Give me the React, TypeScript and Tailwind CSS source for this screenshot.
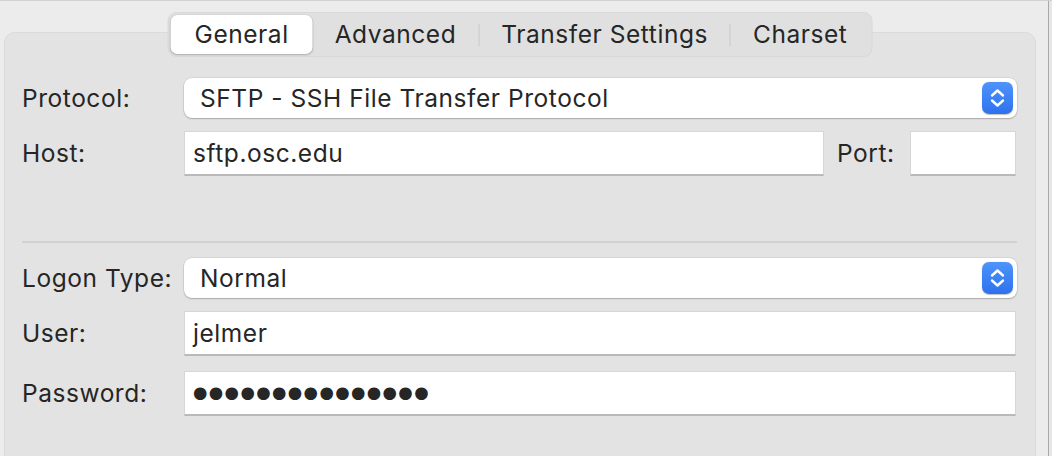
import React from "react";

const font = { fontFamily: "Inter, 'Noto Sans', 'Liberation Sans', sans-serif", letterSpacing: "0.55px" };

function Stepper() {
  return (
    <div className="absolute right-[4px] top-1/2 -translate-y-1/2 w-[31px] h-[32px] rounded-[7px] bg-gradient-to-b from-[#4f93fa] to-[#2d72ee] flex items-center justify-center shadow-[0_0.5px_1px_rgba(0,0,0,0.25)]">
      <svg width="31" height="32" viewBox="0 0 31 32" fill="none">
        <path d="M10 13.5 L15.5 8.5 L21 13.5" stroke="white" strokeWidth="2.4" strokeLinecap="round" strokeLinejoin="round" />
        <path d="M10 18.5 L15.5 23.5 L21 18.5" stroke="white" strokeWidth="2.4" strokeLinecap="round" strokeLinejoin="round" />
      </svg>
    </div>
  );
}

function Select({ value }: { value: string }) {
  return (
    <div className="relative w-[833px] h-[40px] bg-white rounded-[8px] shadow-[0_0_0_0.5px_rgba(0,0,0,0.12),0_1px_1.5px_rgba(0,0,0,0.22)] flex items-center pl-[16px] text-[24.5px] text-[#262626] whitespace-nowrap">
      {value}
      <Stepper />
    </div>
  );
}

function Input({ w, children }: { w: string; children?: React.ReactNode }) {
  return (
    <div className={`${w} h-[45px] bg-white border-t border-l border-r border-[#d6d6d6] border-b-[2px] border-b-[#b9b9b9] flex items-center pl-[8px] text-[24.5px] text-[#262626] whitespace-nowrap`}>
      {children}
    </div>
  );
}

function Label({ children }: { children: React.ReactNode }) {
  return <div className="w-[162px] shrink-0 text-[24.5px] text-[#262626] whitespace-nowrap">{children}</div>;
}

export default function App() {
  const tabs = ["General", "Advanced", "Transfer Settings", "Charset"];
  return (
    <div style={font} className="w-[1052px] h-[456px] bg-[#ececec] overflow-hidden flex border-t border-[#d2d2d2]">
      <div className="w-[1048px] shrink-0 pt-[31px] pl-[4px] pr-[12px]">
        <div className="relative h-[460px] bg-[#e3e3e3] rounded-[11px] border border-[#dadada] pl-[17px] pr-[18px] pt-[45px]">
          <div className="absolute left-1/2 -translate-x-1/2 top-[-21px] flex items-center bg-[#e0e0e0] rounded-[9px] p-[2px] border border-[#d9d9d9] whitespace-nowrap">
            {tabs.map((t, i) => (
              <React.Fragment key={t}>
                {i >= 2 && <div className="w-px h-[22px] bg-[#c9c9c9]" />}
                <div
                  className={
                    i === 0
                      ? "h-[39px] px-[24px] flex items-center bg-white rounded-[7px] shadow-[0_0_0_0.5px_rgba(0,0,0,0.08),0_1px_2px_rgba(0,0,0,0.2)] text-[24.5px] text-[#262626]"
                      : "h-[39px] px-[22px] flex items-center text-[24.5px] text-[#262626]"
                  }
                >
                  {t}
                </div>
              </React.Fragment>
            ))}
          </div>

          <div className="flex items-center">
            <Label>Protocol:</Label>
            <Select value="SFTP - SSH File Transfer Protocol" />
          </div>

          <div className="flex items-center mt-[13px]">
            <Label>Host:</Label>
            <Input w="w-[640px]">sftp.osc.edu</Input>
            <div className="ml-[13px] w-[73px] text-[24.5px] text-[#262626]">Port:</div>
            <Input w="w-[106px]" />
          </div>

          <div className="mt-[65px] h-[2px] bg-[#d2d2d2]" />

          <div className="flex items-center mt-[15px]">
            <Label>Logon Type:</Label>
            <Select value="Normal" />
          </div>

          <div className="flex items-center mt-[13px]">
            <Label>User:</Label>
            <Input w="w-[832px]">jelmer</Input>
          </div>

          <div className="flex items-center mt-[15px]">
            <Label>Password:</Label>
            <Input w="w-[832px]">
              <span className="text-[16.5px] tracking-[1.4px] text-[#262626]" style={{ fontFamily: "'DejaVu Sans', sans-serif" }}>
                {"●●●●●●●●●●●●●●●"}
              </span>
            </Input>
          </div>
        </div>
      </div>
      <div className="w-px bg-[#a9a9a9]" />
      <div className="flex-1 bg-[#e6e6e6]" />
    </div>
  );
}
